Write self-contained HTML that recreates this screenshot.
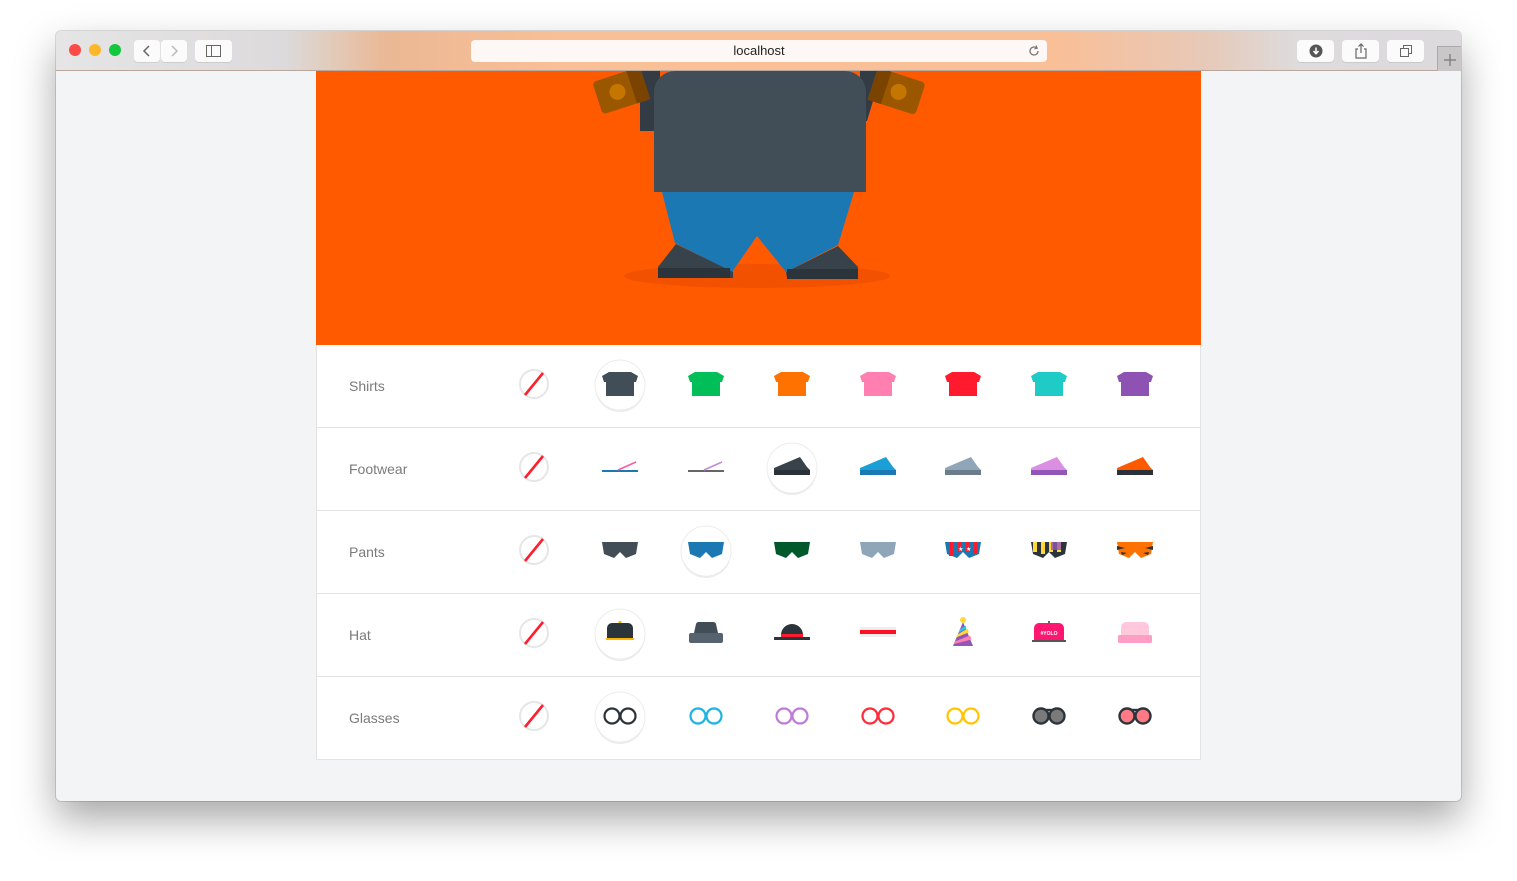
<!DOCTYPE html>
<html><head><meta charset="utf-8"><style>
*{margin:0;padding:0;box-sizing:border-box}
body{width:1517px;height:881px;background:#fff;position:relative;overflow:hidden;font-family:"Liberation Sans",sans-serif}
.win{position:absolute;left:56px;top:31px;width:1405px;height:770px;border-radius:5px;overflow:hidden;box-shadow:0 18px 40px rgba(0,0,0,.35),0 0 0 1px rgba(0,0,0,.12);background:#f3f4f6}
.bar{position:absolute;left:0;top:0;width:1405px;height:40px;background:linear-gradient(90deg,#e6e5e6 0,#dcdadb 230px,#eab894 330px,#f9bf97 500px,#f9bf97 1000px,#e7c9b8 1150px,#dddbdc 1240px,#dcdadc 100%);border-bottom:1px solid #b9a79d}
.dot{position:absolute;top:13px;width:12px;height:12px;border-radius:50%}
.btn{position:absolute;top:9px;height:22px;background:#fcfbfb;border-radius:4px;box-shadow:0 1px 0 rgba(0,0,0,.08)}
.url{position:absolute;left:415px;top:9px;width:576px;height:22px;background:#fdf8f5;border-radius:4px;font-size:13px;text-align:center;line-height:22px;color:#222}
.stage{position:absolute;left:260px;top:40px;width:885px;height:274px;background:#ff5a00;overflow:hidden}
.rows{position:absolute;left:260px;top:314px;width:885px;height:415px;background:#fff;border:1px solid #e3e3e3;border-top:none}
.row{height:83px;border-bottom:1px solid #e3e3e3;position:relative}
.row:last-child{border-bottom:none}
.lab{position:absolute;left:32px;top:33px;font-size:14px;color:#7b7b7b}
</style></head><body>
<div class="win">
 <div class="bar">
  <div class="dot" style="left:13px;background:#fc4a46"></div>
  <div class="dot" style="left:33px;background:#fdb82a"></div>
  <div class="dot" style="left:53px;background:#13c73e"></div>
  <div class="btn" style="left:78px;width:26px"><svg width="26" height="22"><path d="M15 6l-5 5 5 5" stroke="#666" stroke-width="1.5" fill="none"/></svg></div>
  <div class="btn" style="left:105px;width:26px"><svg width="26" height="22"><path d="M11 6l5 5-5 5" stroke="#bbb" stroke-width="1.5" fill="none"/></svg></div>
  <div class="btn" style="left:139px;width:37px"><svg width="37" height="22"><rect x="11.5" y="5.5" width="14" height="11" stroke="#666" fill="none"/><line x1="16.5" y1="5.5" x2="16.5" y2="16.5" stroke="#666"/></svg></div>
  <div class="url">localhost<svg style="position:absolute;right:6px;top:4px" width="14" height="14"><path d="M11 7a4 4 0 1 1-1.5-3.1" stroke="#777" stroke-width="1.3" fill="none"/><path d="M9 1.5l1.2 2.7-2.8.6" stroke="#777" stroke-width="1.2" fill="none"/></svg></div>
  <div class="btn" style="left:1241px;width:37px"><svg width="37" height="22"><circle cx="19" cy="11" r="6.5" fill="#555"/><path d="M19 7.5v6M16.5 11l2.5 2.8 2.5-2.8" stroke="#fff" stroke-width="1.5" fill="none"/></svg></div>
  <div class="btn" style="left:1286px;width:37px"><svg width="37" height="22"><path d="M16 9h-2v9h10V9h-2M19 4v9M16.5 6.5L19 4l2.5 2.5" stroke="#666" stroke-width="1.2" fill="none"/></svg></div>
  <div class="btn" style="left:1331px;width:37px"><svg width="37" height="22"><rect x="13.5" y="8.5" width="8" height="8" stroke="#666" fill="none"/><path d="M16.5 8.5v-3h8v8h-3" stroke="#666" fill="none"/></svg></div>
  <div style="position:absolute;left:1381px;top:15px;width:24px;height:25px;background:#c9c7c8;border-left:1px solid #aaa;border-top:1px solid #aaa"><svg width="24" height="25"><path d="M12 7v12M6 13h12" stroke="#777" stroke-width="1.2"/></svg></div>
 </div>
 <div class="stage">
  <svg width="885" height="274" viewBox="316 71 885 274">
   <ellipse cx="757" cy="276" rx="133" ry="12" fill="#f25200"/>
   <path d="M640 71h20v60h-20z" fill="#333c45"/><path d="M860 71h22l-15 50h-7z" fill="#333c45"/>
   <g transform="rotate(-18 620 90)"><rect x="596" y="74" width="50" height="34" rx="4" fill="#9a5700"/><rect x="632" y="74" width="14" height="34" fill="#7a4400"/><circle cx="617" cy="91" r="8" fill="#c57600"/></g>
   <g transform="rotate(18 896 90)"><rect x="872" y="74" width="50" height="34" rx="4" fill="#9a5700"/><rect x="872" y="74" width="14" height="34" fill="#7a4400"/><circle cx="899" cy="91" r="8" fill="#c57600"/></g>
   <path d="M675 71h170a21 21 0 0 1 21 21v100h-212v-100a21 21 0 0 1 21-21z" fill="#414e58"/>
   <path d="M662 192h192l-16 53l-52 27l-29-36l-25 36l-57-29z" fill="#1b78b2"/>
   <path d="M676 244l57 28v6h-75v-11z" fill="#37424a"/><rect x="658" y="268" width="72" height="10" fill="#2c343b"/>
   <path d="M838 246l-52 26l1 6h71v-11z" fill="#37424a"/><rect x="787" y="269" width="71" height="10" fill="#2c343b"/>
  </svg>
 </div>
 <div class="rows">
  <div class="row"><div class="lab">Shirts</div></div>
  <div class="row"><div class="lab">Footwear</div></div>
  <div class="row"><div class="lab">Pants</div></div>
  <div class="row"><div class="lab">Hat</div></div>
  <div class="row"><div class="lab">Glasses</div></div>
 </div>
</div>
<svg style="position:absolute;left:0;top:0" width="1517" height="881">
 <defs>
  <g id="none"><circle r="14" fill="#fff" stroke="#e6e6e6" stroke-width="2"/><line x1="-9" y1="11" x2="9" y2="-11" stroke="#ff1e2d" stroke-width="2.6"/></g>
  <g id="sel"><circle cx="0" cy="2" r="25" fill="#ececec"/><circle r="25" fill="#fff" stroke="#ececec" stroke-width="1"/></g>
  <path id="shirt" d="M-11-12H11L18-8L16-2H14V12H-14V-2H-16L-18-8Z"/>
  <path id="shoe" d="M-18 1L8-10L15 0L18 3V8H-18Z"/>
  <path id="pants" d="M-18-8H18L16 4L6 8L0 2L-6 8L-16 4Z"/>
 </defs>
 <use href="#none" x="534" y="384"/>
 <use href="#sel" x="620" y="385"/>
 <use href="#shirt" x="620" y="384" fill="#414e58"/>
 <use href="#shirt" x="706" y="384" fill="#00be58"/>
 <use href="#shirt" x="792" y="384" fill="#ff7200"/>
 <use href="#shirt" x="878" y="384" fill="#ff80b0"/>
 <use href="#shirt" x="963" y="384" fill="#ff1a2e"/>
 <use href="#shirt" x="1049" y="384" fill="#1fcbc6"/>
 <use href="#shirt" x="1135" y="384" fill="#8e52b2"/>
 <use href="#none" x="534" y="467"/>
 <g transform="translate(620 467)"><rect x="-18" y="3" width="36" height="2" fill="#1b78b2"/><line x1="-2" y1="3" x2="16" y2="-5" stroke="#ff5aa0" stroke-width="1.6"/></g>
 <g transform="translate(706 467)"><rect x="-18" y="3" width="36" height="2" fill="#666"/><line x1="-2" y1="3" x2="16" y2="-5" stroke="#c08ad8" stroke-width="1.6"/></g>
 <use href="#sel" x="792" y="468"/>
 <g transform="translate(792 467)"><use href="#shoe" fill="#37424a"/><rect x="-18" y="3" width="36" height="5" fill="#2a3138"/></g>
 <g transform="translate(878 467)"><use href="#shoe" fill="#1a9fd6"/><rect x="-18" y="3" width="36" height="5" fill="#1b78b2"/></g>
 <g transform="translate(963 467)"><use href="#shoe" fill="#8fa5b8"/><rect x="-18" y="3" width="36" height="5" fill="#6c7c8a"/></g>
 <g transform="translate(1049 467)"><use href="#shoe" fill="#da8fe3"/><rect x="-18" y="3" width="36" height="5" fill="#9256b8"/></g>
 <g transform="translate(1135 467)"><use href="#shoe" fill="#ff5a00"/><rect x="-18" y="3" width="36" height="5" fill="#2a3138"/></g>
 <use href="#none" x="534" y="550"/>
 <use href="#pants" x="620" y="550" fill="#414e58"/>
 <use href="#sel" x="706" y="551"/>
 <use href="#pants" x="706" y="550" fill="#1b78b2"/>
 <use href="#pants" x="792" y="550" fill="#00592a"/>
 <use href="#pants" x="878" y="550" fill="#8fa5b8"/>
 <g transform="translate(963 550)"><use href="#pants" fill="#1b78b2"/><path d="M-14-8h4v14h-4zM-6-8h4v10h-4zM2-8h4v10h-4zM10-8h4v12h-4z" fill="#ff1a2e"/><text x="-5" y="1" font-size="6" fill="#fff">★</text><text x="3" y="1" font-size="6" fill="#fff">★</text></g>
 <g transform="translate(1049 550)"><use href="#pants" fill="#2c343b"/><path d="M-16-8h4v10h-4zM-8-8h4v12h-4zM0-8h4v10h-4zM8-8h4v10h-4z" fill="#ffd83a"/><path d="M2-8h10v8h-10z" fill="#9256b8" opacity=".8"/></g>
 <g transform="translate(1135 550)"><use href="#pants" fill="#ff7200"/><path d="M-18-4l8 2-8 2zM18-4l-8 2 8 2zM-14 2l6 1-5 2zM14 2l-6 1 5 2z" fill="#2c343b"/></g>
 <use href="#none" x="534" y="633"/>
 <use href="#sel" x="620" y="634"/>
 <g transform="translate(620 633)"><rect x="-1.5" y="-12" width="3" height="3" fill="#ffb400"/><path d="M-13 5V-5a5 5 0 0 1 5-5h16a5 5 0 0 1 5 5v10z" fill="#2c343b"/><rect x="-14" y="5" width="28" height="2" fill="#ffb400"/></g>
 <g transform="translate(706 633)"><path d="M-12 0L-10-9a3 3 0 0 1 3-2h14a3 3 0 0 1 3 2l2 9z" fill="#414e58"/><rect x="-17" y="0" width="34" height="10" rx="2" fill="#56636e"/></g>
 <g transform="translate(792 633)"><path d="M-11 2a11 11 0 0 1 22 0z" fill="#2c343b"/><rect x="-11" y="1" width="22" height="3" fill="#ff1a2e"/><rect x="-18" y="4" width="36" height="3" fill="#2c343b"/></g>
 <g transform="translate(878 633)"><rect x="-18" y="-6" width="36" height="10" fill="#eee"/><rect x="-18" y="-3" width="36" height="4" fill="#ff0f24"/></g>
 <g transform="translate(963 633)"><path d="M0-11L-10 13H10Z" fill="#9256b8"/><path d="M-5.3 1.5L4.5-4.5L6 -0.8L-7 4.5Z" fill="#ffd83a"/><path d="M-3.3-3.3L2.5-7.5L3.5-4.8L-4.6 0Z" fill="#1fcbe6"/><path d="M-8 8.5L7 2.5L8.5 6.5L-9.2 11Z" fill="#ff80b0"/><circle cx="0" cy="-13" r="3" fill="#ffd83a"/></g>
 <g transform="translate(1049 633)"><rect x="-1" y="-12" width="2" height="3" fill="#666"/><path d="M-15 7V-5a5 5 0 0 1 5-5h20a5 5 0 0 1 5 5v12z" fill="#ff1670"/><rect x="-17" y="7" width="34" height="2" fill="#555"/><text x="0" y="2" font-size="5" fill="#fff" text-anchor="middle" font-weight="bold">#YOLO</text></g>
 <g transform="translate(1135 633)"><path d="M-14 2V-6a5 5 0 0 1 5-5h18a5 5 0 0 1 5 5v8z" fill="#ffc8dc"/><rect x="-17" y="2" width="34" height="8" rx="1.5" fill="#ff9ec4"/></g>
 <use href="#none" x="534" y="716"/>
 <use href="#sel" x="620" y="717"/>
 <g fill="none" stroke-width="2.2">
  <g transform="translate(620 716)" stroke="#2c343b"><circle cx="-8" r="7.5"/><circle cx="8" r="7.5"/></g>
  <g transform="translate(706 716)" stroke="#1cb4e0"><circle cx="-8" r="7.5"/><circle cx="8" r="7.5"/></g>
  <g transform="translate(792 716)" stroke="#c07ad8"><circle cx="-8" r="7.5"/><circle cx="8" r="7.5"/></g>
  <g transform="translate(878 716)" stroke="#ff2a3a"><circle cx="-8" r="7.5"/><circle cx="8" r="7.5"/></g>
  <g transform="translate(963 716)" stroke="#ffc600"><circle cx="-8" r="7.5"/><circle cx="8" r="7.5"/></g>
 </g>
 <g transform="translate(1049 716)" stroke="#2c343b" stroke-width="2.4" fill="#7a7a7a"><line x1="-8" y1="-6" x2="8" y2="-6"/><circle cx="-8" r="7.5"/><circle cx="8" r="7.5"/></g>
 <g transform="translate(1135 716)" stroke="#2c343b" stroke-width="2.4" fill="#ff7a84"><line x1="-8" y1="-6" x2="8" y2="-6"/><circle cx="-8" r="7.5"/><circle cx="8" r="7.5"/></g>
</svg>
</body></html>
